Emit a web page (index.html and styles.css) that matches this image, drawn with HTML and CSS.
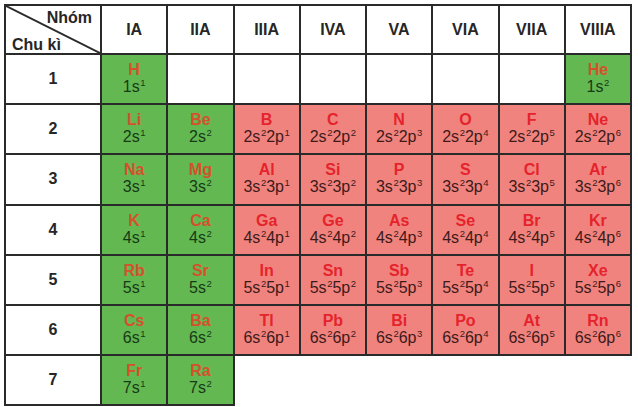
FILE: index.html
```html
<!DOCTYPE html>
<html lang="vi">
<head>
<meta charset="utf-8">
<title>Bảng tuần hoàn - nhóm A</title>
<link rel="stylesheet" href="styles.css">
</head>
<body>
<div class="ptable">
  <div class="cell corner">
    <svg class="diag" viewBox="0 0 100 100" preserveAspectRatio="none"><line x1="0" y1="0" x2="100" y2="100" stroke="#2a2a2a" stroke-width="2" vector-effect="non-scaling-stroke"/></svg>
    <span class="nhom">Nhóm</span>
    <span class="chuki">Chu kì</span>
  </div>
  <div class="cell head">IA</div>
  <div class="cell head">IIA</div>
  <div class="cell head">IIIA</div>
  <div class="cell head">IVA</div>
  <div class="cell head">VA</div>
  <div class="cell head">VIA</div>
  <div class="cell head">VIIA</div>
  <div class="cell head">VIIIA</div>

  <div class="cell period">1</div>
  <div class="cell s"><b>H</b><span>1s<sup>1</sup></span></div>
  <div class="cell"></div><div class="cell"></div><div class="cell"></div><div class="cell"></div><div class="cell"></div><div class="cell"></div>
  <div class="cell s"><b>He</b><span>1s<sup>2</sup></span></div>

  <div class="cell period">2</div>
  <div class="cell s"><b>Li</b><span>2s<sup>1</sup></span></div>
  <div class="cell s"><b>Be</b><span>2s<sup>2</sup></span></div>
  <div class="cell p"><b>B</b><span>2s<sup>2</sup>2p<sup>1</sup></span></div>
  <div class="cell p"><b>C</b><span>2s<sup>2</sup>2p<sup>2</sup></span></div>
  <div class="cell p"><b>N</b><span>2s<sup>2</sup>2p<sup>3</sup></span></div>
  <div class="cell p"><b>O</b><span>2s<sup>2</sup>2p<sup>4</sup></span></div>
  <div class="cell p"><b>F</b><span>2s<sup>2</sup>2p<sup>5</sup></span></div>
  <div class="cell p"><b>Ne</b><span>2s<sup>2</sup>2p<sup>6</sup></span></div>

  <div class="cell period">3</div>
  <div class="cell s"><b>Na</b><span>3s<sup>1</sup></span></div>
  <div class="cell s"><b>Mg</b><span>3s<sup>2</sup></span></div>
  <div class="cell p"><b>Al</b><span>3s<sup>2</sup>3p<sup>1</sup></span></div>
  <div class="cell p"><b>Si</b><span>3s<sup>2</sup>3p<sup>2</sup></span></div>
  <div class="cell p"><b>P</b><span>3s<sup>2</sup>3p<sup>3</sup></span></div>
  <div class="cell p"><b>S</b><span>3s<sup>2</sup>3p<sup>4</sup></span></div>
  <div class="cell p"><b>Cl</b><span>3s<sup>2</sup>3p<sup>5</sup></span></div>
  <div class="cell p"><b>Ar</b><span>3s<sup>2</sup>3p<sup>6</sup></span></div>

  <div class="cell period">4</div>
  <div class="cell s"><b>K</b><span>4s<sup>1</sup></span></div>
  <div class="cell s"><b>Ca</b><span>4s<sup>2</sup></span></div>
  <div class="cell p"><b>Ga</b><span>4s<sup>2</sup>4p<sup>1</sup></span></div>
  <div class="cell p"><b>Ge</b><span>4s<sup>2</sup>4p<sup>2</sup></span></div>
  <div class="cell p"><b>As</b><span>4s<sup>2</sup>4p<sup>3</sup></span></div>
  <div class="cell p"><b>Se</b><span>4s<sup>2</sup>4p<sup>4</sup></span></div>
  <div class="cell p"><b>Br</b><span>4s<sup>2</sup>4p<sup>5</sup></span></div>
  <div class="cell p"><b>Kr</b><span>4s<sup>2</sup>4p<sup>6</sup></span></div>

  <div class="cell period">5</div>
  <div class="cell s"><b>Rb</b><span>5s<sup>1</sup></span></div>
  <div class="cell s"><b>Sr</b><span>5s<sup>2</sup></span></div>
  <div class="cell p"><b>In</b><span>5s<sup>2</sup>5p<sup>1</sup></span></div>
  <div class="cell p"><b>Sn</b><span>5s<sup>2</sup>5p<sup>2</sup></span></div>
  <div class="cell p"><b>Sb</b><span>5s<sup>2</sup>5p<sup>3</sup></span></div>
  <div class="cell p"><b>Te</b><span>5s<sup>2</sup>5p<sup>4</sup></span></div>
  <div class="cell p"><b>I</b><span>5s<sup>2</sup>5p<sup>5</sup></span></div>
  <div class="cell p"><b>Xe</b><span>5s<sup>2</sup>5p<sup>6</sup></span></div>

  <div class="cell period">6</div>
  <div class="cell s"><b>Cs</b><span>6s<sup>1</sup></span></div>
  <div class="cell s"><b>Ba</b><span>6s<sup>2</sup></span></div>
  <div class="cell p"><b>Tl</b><span>6s<sup>2</sup>6p<sup>1</sup></span></div>
  <div class="cell p"><b>Pb</b><span>6s<sup>2</sup>6p<sup>2</sup></span></div>
  <div class="cell p"><b>Bi</b><span>6s<sup>2</sup>6p<sup>3</sup></span></div>
  <div class="cell p"><b>Po</b><span>6s<sup>2</sup>6p<sup>4</sup></span></div>
  <div class="cell p"><b>At</b><span>6s<sup>2</sup>6p<sup>5</sup></span></div>
  <div class="cell p"><b>Rn</b><span>6s<sup>2</sup>6p<sup>6</sup></span></div>

  <div class="cell period">7</div>
  <div class="cell s"><b>Fr</b><span>7s<sup>1</sup></span></div>
  <div class="cell s"><b>Ra</b><span>7s<sup>2</sup></span></div>
  <div class="void"></div><div class="void"></div><div class="void"></div><div class="void"></div><div class="void"></div><div class="void"></div>
</div>
</body>
</html>
```
FILE: styles.css
```css
html, body {
  margin: 0;
  padding: 0;
  background: #ffffff;
}

body {
  font-family: "Liberation Sans", Arial, sans-serif;
  color: #222222;
}

.ptable {
  display: grid;
  grid-template-columns: 96px repeat(8, 66.25px);
  grid-template-rows: 49px repeat(7, 50.2px);
  width: max-content;
  margin: 4px 0 0 4px;
  border-top: 2px solid #2a2a2a;
  border-left: 2px solid #2a2a2a;
}

.cell {
  box-sizing: border-box;
  border-right: 2px solid #2a2a2a;
  border-bottom: 2px solid #2a2a2a;
  display: flex;
  flex-direction: column;
  align-items: center;
  justify-content: center;
  background: #ffffff;
}

.void {
  background: #ffffff;
}

.head,
.period {
  font-weight: bold;
  font-size: 16px;
  color: #262626;
}

.head {
  padding-top: 1px;
}

.corner {
  position: relative;
  display: block;
}

.diag {
  position: absolute;
  left: 0;
  top: 0;
  width: 100%;
  height: 100%;
}

.nhom,
.chuki {
  position: absolute;
  font-weight: bold;
  font-size: 15px;
  color: #262626;
  line-height: 16px;
}

.nhom {
  top: 3px;
  right: 8px;
}

.chuki {
  top: 30px;
  left: 6px;
}

.s {
  background: #63b851;
}

.p {
  background: #f1837e;
}

.cell b {
  font-size: 16px;
  line-height: 16px;
  font-weight: bold;
  margin-top: -1px;
}

.cell span {
  font-size: 16px;
  line-height: 17px;
}

.s b {
  color: #d4512c;
}

.p b {
  color: #e5232c;
}

.s span {
  color: #173a17;
}

.p span {
  color: #3d1a1a;
}

sup {
  font-size: 9.5px;
  line-height: 0;
  vertical-align: 6px;
  margin-left: 0.5px;
}
```
